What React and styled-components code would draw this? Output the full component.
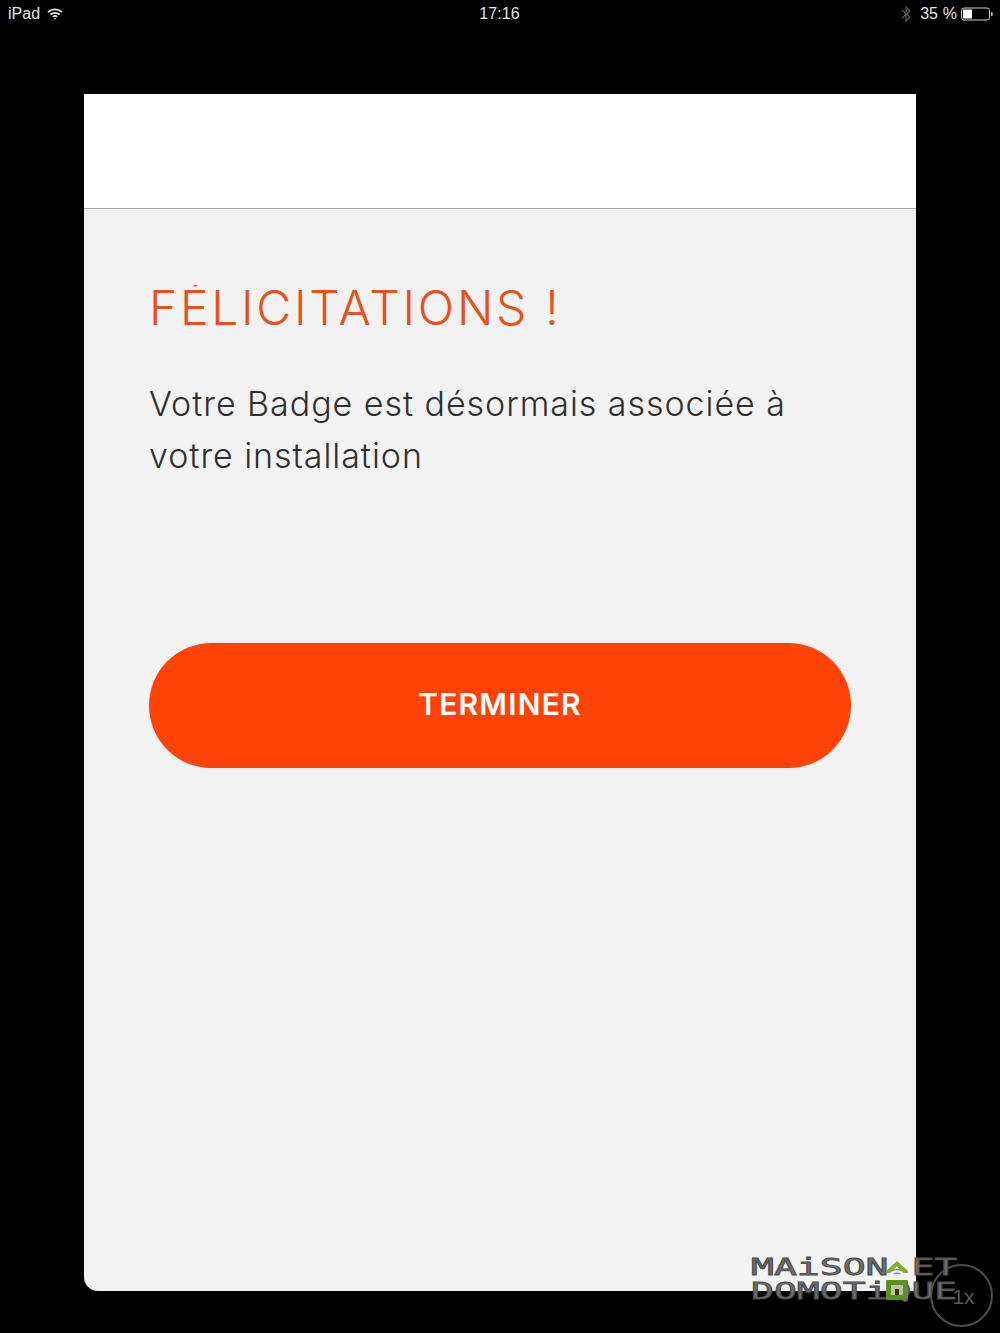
import React from 'react';
import styled, { createGlobalStyle } from 'styled-components';

const GlobalStyle = createGlobalStyle`
  html, body {
    margin: 0;
    padding: 0;
    background: #000000;
  }
  body {
    font-family: "Inter", "Liberation Sans", sans-serif;
  }
`;

const Page = styled.div`
  position: relative;
  width: 1000px;
  height: 1333px;
  overflow: hidden;
  background: #000000;
`;

const StatusBar = styled.div`
  display: grid;
  grid-template-columns: 1fr auto 1fr;
  align-items: center;
  height: 27px;
  padding: 0 7px 0 8px;
  color: #e6e6e6;
  font-family: "Liberation Sans", sans-serif;
  font-size: 16px;
`;

const StatusGroup = styled.div`
  display: flex;
  align-items: center;
  gap: ${(p) => p.$gap || 8}px;
  justify-content: ${(p) => (p.$end ? 'flex-end' : 'flex-start')};
`;

const Clock = styled.span`
  margin-right: 2px;
  letter-spacing: 0.1px;
`;

const Percent = styled.span`
  margin-left: 5px;
  letter-spacing: 0.1px;
`;

const Card = styled.main`
  display: flex;
  flex-direction: column;
  height: 1197px;
  margin: 67px 84px 0;
  background: #f2f2f2;
  border-bottom-left-radius: 14px;
`;

const CardHeader = styled.div`
  height: 114px;
  flex: none;
  background: #ffffff;
  border-bottom: 1px solid #a9a9a9;
`;

const CardBody = styled.div`
  padding: 68px 65px 0;
`;

const Title = styled.h1`
  margin: 0;
  font-size: 48px;
  line-height: 62px;
  font-weight: 300;
  letter-spacing: 2.7px;
  color: #e8501c;
`;

const AccentClip = styled.span`
  display: inline-block;
  clip-path: inset(8px 0 0 0);
`;

const Message = styled.p`
  margin: 39px 0 0;
  font-size: 34px;
  line-height: 52px;
  font-weight: 300;
  letter-spacing: 0.95px;
  color: #2f2f31;
`;

const FinishButton = styled.button`
  display: block;
  width: 702px;
  height: 125px;
  margin-top: 161px;
  padding: 0 0 4px;
  border: none;
  border-radius: 63px;
  background: #ff4208;
  color: #ffffff;
  font-family: "Inter", "Liberation Sans", sans-serif;
  font-size: 30px;
  font-weight: 600;
  letter-spacing: 1.2px;
`;

const Logo = styled.div`
  position: absolute;
  left: 751px;
  top: 1255px;
  width: 210px;
  font-family: "DejaVu Sans Mono", monospace;
  font-weight: 400;
  font-size: 23.5px;
  line-height: 24px;
  color: #6e6e6e;
  -webkit-text-stroke: 0.8px #4a4a4a;
`;

const LogoLine = styled.div`
  height: 24px;
  white-space: pre;
  transform: scaleX(1.62);
  transform-origin: left center;
`;

const House = styled.svg`
  position: absolute;
  left: 134px;
  top: 6px;
`;

const AssistiveTouch = styled.div`
  position: absolute;
  left: 930px;
  top: 1264px;
  width: 63px;
  height: 63px;
  box-sizing: border-box;
  padding: 3px 0 0 4px;
  border: 2px solid #4d4d4d;
  border-radius: 50%;
  display: flex;
  align-items: center;
  justify-content: center;
  color: #5a5a5a;
  font-family: "Liberation Sans", sans-serif;
  font-size: 21px;
`;

function WifiIcon() {
  return (
    <svg width="16" height="12" viewBox="0 0 16 12" fill="none" stroke="#e6e6e6" strokeWidth="1.7">
      <path d="M1 4 C5 0.4 11 0.4 15 4" />
      <path d="M3.4 6.5 C6 4.2 10 4.2 12.6 6.5" />
      <path d="M5.8 8.9 C7 7.9 9 7.9 10.2 8.9" />
      <circle cx="8" cy="10.6" r="0.9" fill="#e6e6e6" stroke="none" />
    </svg>
  );
}

function BluetoothIcon() {
  return (
    <svg width="10" height="16" viewBox="0 0 10 16" fill="none" stroke="#5e5e5e" strokeWidth="1.2">
      <path d="M1 4 L9 11 L5 15 V1 L9 5 L1 12" />
    </svg>
  );
}

function BatteryIcon() {
  return (
    <svg width="32" height="14" viewBox="0 0 32 14">
      <rect x="0.5" y="1" width="28" height="12" rx="2.5" fill="none" stroke="#cfcfcf" />
      <rect x="2" y="2.5" width="9" height="9" fill="#ffffff" />
      <rect x="30" y="5" width="1.6" height="4" rx="0.8" fill="#cfcfcf" />
    </svg>
  );
}

function HouseMark() {
  return (
    <House width="24" height="40" viewBox="0 0 24 40">
      <path d="M1 10 L12 0 L23 10 V12 H19 L12 5.5 L5 12 H1 Z" fill="#86ad2d" />
      <path d="M7 10 C9.5 8 14.5 8 17 10" fill="none" stroke="#8a8a8a" strokeWidth="1.4" />
      <path d="M9 13 C10.5 11.8 13.5 11.8 15 13" fill="none" stroke="#8a8a8a" strokeWidth="1.4" />
      <rect x="1" y="19" width="22" height="20" rx="1" fill="#5f8f1f" />
      <rect x="6" y="24" width="12" height="10" fill="#b7c4a0" />
      <rect x="10" y="28" width="4" height="6" fill="#2d3f12" />
    </House>
  );
}

function App() {
  return (
    <Page>
      <GlobalStyle />
      <StatusBar>
        <StatusGroup $gap={7}>
          <span>iPad</span>
          <WifiIcon />
        </StatusGroup>
        <Clock>17:16</Clock>
        <StatusGroup $end $gap={4}>
          <BluetoothIcon />
          <Percent>35 %</Percent>
          <BatteryIcon />
        </StatusGroup>
      </StatusBar>
      <Card>
        <CardHeader />
        <CardBody>
          <Title>
            F<AccentClip>É</AccentClip>LICITATIONS !
          </Title>
          <Message>
            Votre Badge est désormais associée à
            <br />
            votre installation
          </Message>
          <FinishButton>TERMINER</FinishButton>
        </CardBody>
      </Card>
      <AssistiveTouch>1x</AssistiveTouch>
      <Logo>
        <LogoLine>MAiSON ET</LogoLine>
        <LogoLine>DOMOTiQUE</LogoLine>
        <HouseMark />
      </Logo>
    </Page>
  );
}

export default App;
